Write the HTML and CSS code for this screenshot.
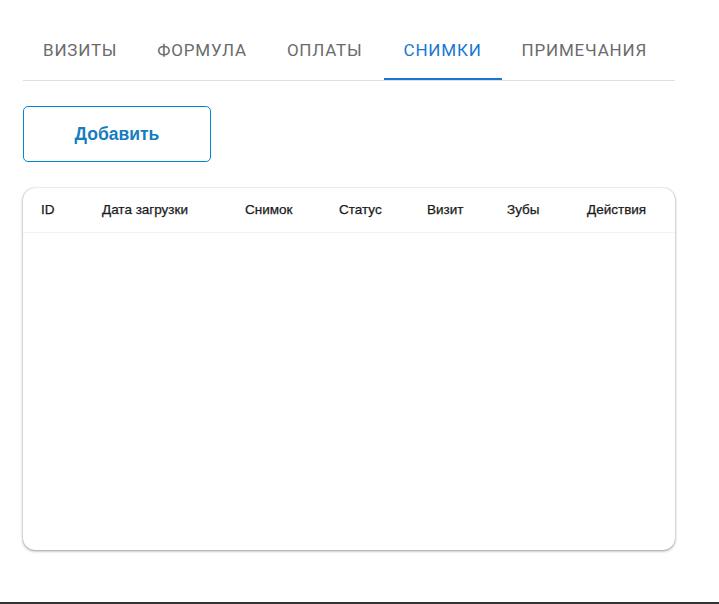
FILE: index.html
```html
<!DOCTYPE html>
<html lang="ru">
<head>
<meta charset="utf-8">
<title>Снимки</title>
<link rel="stylesheet" href="styles.css">
</head>
<body>
<div class="page">
  <nav class="tabs">
    <div class="tab">Визиты</div>
    <div class="tab">Формула</div>
    <div class="tab">Оплаты</div>
    <div class="tab active">Снимки</div>
    <div class="tab">Примечания</div>
  </nav>
  <button class="add-btn" type="button">Добавить</button>
  <div class="card">
    <div class="thead">
      <div class="th">ID</div>
      <div class="th">Дата загрузки</div>
      <div class="th">Снимок</div>
      <div class="th">Статус</div>
      <div class="th">Визит</div>
      <div class="th">Зубы</div>
      <div class="th">Действия</div>
    </div>
    <div class="tbody"></div>
  </div>
</div>
<div class="footer-line"></div>
</body>
</html>
```
FILE: styles.css
```css
html, body {
  margin: 0;
  padding: 0;
  background: #fff;
  height: 100%;
}
body {
  display: flex;
  flex-direction: column;
  font-family: Roboto, "Liberation Sans", sans-serif;
}
.page {
  flex: 1;
  padding: 32px 0 0 23px;
  width: 652px;
}
.tabs {
  display: flex;
  border-bottom: 1px solid #e0e0e0;
  height: 48px;
}
.tab {
  box-sizing: border-box;
  height: 48px;
  padding: 0 20px 12px 20px;
  display: flex;
  align-items: center;
  font-size: 17px;
  text-transform: uppercase;
  color: #6b6b6b;
  letter-spacing: 0.8px;
}
.tab.active {
  margin-left: 1px;
  color: #1976d2;
  border-bottom: 2px solid #1976d2;
  padding-bottom: 10px;
}
.add-btn {
  display: block;
  margin-top: 25px;
  width: 188px;
  height: 56px;
  background: #fff;
  border: 1px solid #0288d1;
  border-radius: 5px;
  color: #167cc0;
  font-family: "Liberation Sans", Arial, sans-serif;
  font-weight: 700;
  font-size: 17.5px;
  padding-top: 2px;
}
.card {
  margin-top: 26px;
  height: 362px;
  border-radius: 12px;
  background: #fff;
  box-shadow: 0 1px 3px rgba(0,0,0,0.4), 0 0 1px rgba(0,0,0,0.25);
  overflow: hidden;
}
.thead {
  display: grid;
  grid-template-columns: 62px 143px 94px 88px 80px 80px 1fr;
  height: 44px;
  align-items: center;
  border-bottom: 1px solid #f2f2f2;
}
.th {
  padding-left: 17px;
  padding-bottom: 1px;
  font-family: "Liberation Sans", Arial, sans-serif;
  font-size: 13.5px;
  font-weight: 500;
  color: #1a1a1a;
  -webkit-text-stroke: 0.25px #1a1a1a;
}
.th:first-child {
  padding-left: 18px;
}
.footer-line {
  height: 2px;
  background: #333;
  margin-top: auto;
}
```
